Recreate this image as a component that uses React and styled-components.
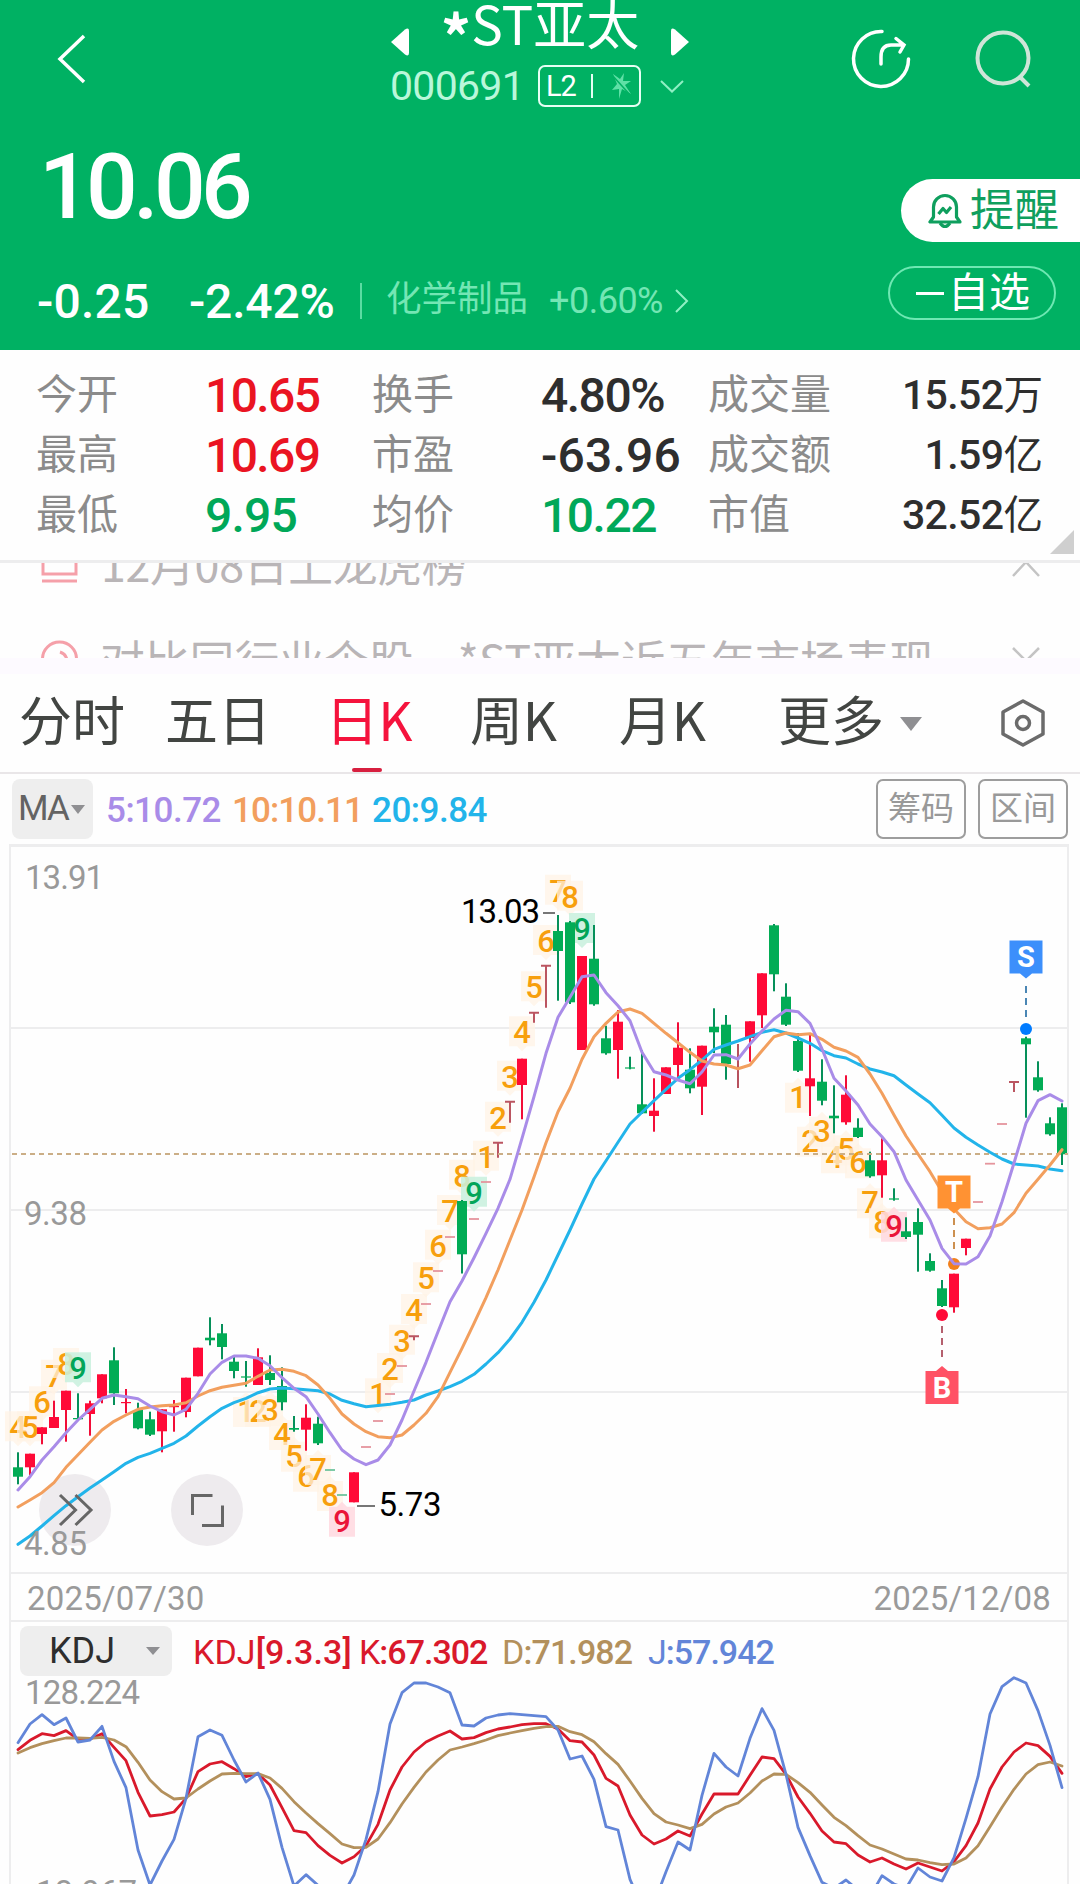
import styled, { createGlobalStyle } from "styled-components";

const colors = {
  green: "#00b163",
  up: "#ff0a37",
  upText: "#ea1422",
  down: "#02ac55",
  downText: "#00a859",
  ma5: "#a98ce8",
  ma10: "#f29f5e",
  ma20: "#22b4ea",
  k: "#d9192b",
  d: "#b3905c",
  j: "#6285d8",
  line: "#ededee",
};

const GlobalStyle = createGlobalStyle`
  * {
    box-sizing: border-box;
  }

  body {
    margin: 0;
    background: #fefefe;
    font-family: Roboto, "Noto Sans CJK SC", sans-serif;
    color: #2e2e2e;
  }

  svg {
    display: block;
    flex: none;
  }
`;

const Page = styled.div`
  width: 1080px;
  height: 1884px;
  overflow: hidden;
`;

/* ---------- header ---------- */

const Header = styled.header`
  height: 350px;
  background: ${colors.green};
  color: #fff;
`;

const TopBar = styled.div`
  display: grid;
  grid-template-columns: 1fr 298px 1fr;
  height: 120px;
`;

const TopLeft = styled.div`
  padding: 34px 0 0 57px;
`;

const TopRight = styled.div`
  display: flex;
  justify-content: flex-end;
  gap: 60px;
  padding: 26px 46px 0 0;
`;

const TitleRow = styled.div`
  display: flex;
  justify-content: space-between;
  height: 65px;

  & svg {
    margin-top: 28px;
  }
`;

const StockName = styled.div`
  font-family: "Noto Sans CJK SC", sans-serif;
  font-size: 53px;
  line-height: 45px;
  white-space: nowrap;

  & span {
    font-size: 60px;
    font-weight: 700;
    line-height: 1px;
    vertical-align: -15px;
  }
`;

const CodeRow = styled.div`
  display: flex;
  align-items: center;
  height: 42px;
`;

const Code = styled.div`
  width: 147px;
  font-size: 41px;
  letter-spacing: -0.7px;
  line-height: 42px;
  text-indent: -1px;
  color: #b9f7da;
`;

const LevelBox = styled.div`
  display: flex;
  align-items: center;
  width: 103px;
  height: 42px;
  padding: 0 4px 0 6px;
  border: 2px solid #e6fff4;
  border-radius: 7px;
  font-size: 29px;
  letter-spacing: -1px;
  margin-right: 19px;

  & svg {
    margin-left: 3px;
  }
`;

const Bar = styled.i`
  width: 2px;
  height: ${(p) => p.$h}px;
  margin: 0 ${(p) => p.$gap}px;
  background: ${(p) => p.$color};
`;

const QuoteArea = styled.div`
  display: flex;
  justify-content: space-between;
  height: 230px;
`;

const Price = styled.div`
  height: 132px;
  padding-left: 39px;
  font-size: 91px;
  font-weight: 500;
  line-height: 134px;
  letter-spacing: -4.6px;
`;

const ChangeRow = styled.div`
  display: flex;
  align-items: center;
  height: 98px;
  padding-left: 37px;
  line-height: 60px;
  white-space: nowrap;
`;

const Change = styled.div`
  width: ${(p) => p.$w}px;
  padding-top: 2px;
  font-size: 48px;
  font-weight: 500;
  letter-spacing: ${(p) => p.$ls}px;
`;

const Sector = styled.div`
  display: flex;
  align-items: center;
  margin-left: 10px;
  color: #74e6b4;
  font-size: 36px;
  letter-spacing: -0.5px;

  & b {
    width: 163px;
    padding-bottom: 4px;
    font-weight: 400;
    font-size: 35.5px;
    letter-spacing: 0;
  }

  & svg {
    margin-left: 12px;
  }
`;

const Actions = styled.div`
  display: flex;
  flex-direction: column;
  align-items: flex-end;
  gap: 24px;
  padding-top: 59px;
`;

const RemindButton = styled.div`
  display: flex;
  align-items: center;
  gap: 8px;
  width: 179px;
  height: 63px;
  padding-left: 27px;
  border-radius: 32px 0 0 32px;
  background: #fff;
  color: #0f9f5e;
  font-size: 44.5px;
  line-height: 60px;
`;

const WatchButton = styled.div`
  display: flex;
  align-items: center;
  gap: 4px;
  width: 168px;
  height: 54px;
  margin-right: 24px;
  padding-left: 26px;
  border: 2px solid #6ee8b3;
  border-radius: 27px;
  font-size: 41px;
  line-height: 50px;

  & i {
    width: 28px;
    height: 3px;
    background: #fff;
  }
`;

/* ---------- stats ---------- */

const Stats = styled.section`
  position: relative;
  display: grid;
  grid-template-columns: repeat(4, 168px) 334px;
  grid-auto-rows: 60px;
  align-content: start;
  height: 213px;
  padding: 15px 0 0 36px;
  border-bottom: 3px solid ${colors.line};
  line-height: 60px;
  white-space: nowrap;
`;

const StatLabel = styled.div`
  font-size: 41px;
  color: #8b8b8b;
`;

const StatValue = styled.div`
  padding-left: 1px;
  font-size: 48px;
  font-weight: 500;
  line-height: 62px;
  letter-spacing: ${(p) => p.$ls}px;
  color: ${(p) => p.$color || "#2e2e2e"};
`;

const StatPair = styled.div`
  display: flex;
  justify-content: space-between;

  & b {
    font-size: 41px;
    font-weight: 500;
    letter-spacing: -0.6px;
  }

  & small {
    margin-right: -1px;
    font-size: 39.5px;
    font-weight: 400;
    letter-spacing: 0;
  }
`;

const Corner = styled.i`
  position: absolute;
  right: 6px;
  bottom: 6px;
  border-left: 24px solid transparent;
  border-bottom: 24px solid #cfcfcf;
`;

/* ---------- news ticker ---------- */

const News = styled.section`
  height: 95px;
  overflow: hidden;
`;

const NewsRow = styled.div`
  display: flex;
  align-items: center;
  height: 96px;
  margin-top: ${(p) => p.$top || 0}px;
  padding: 0 40px 0 ${(p) => p.$left}px;
  font-family: "Noto Sans CJK SC", sans-serif;
  font-size: 44.8px;
  line-height: 60px;
  color: #b9b5b7;
  white-space: pre;

  & p {
    flex: 1;
    margin: 0 0 0 ${(p) => p.$gap}px;
    letter-spacing: ${(p) => p.$ls || 0}px;
    word-spacing: 1px;
  }
`;

const Gap = styled.div`
  height: 16px;
  background: #fdfaff;
`;

/* ---------- tabs ---------- */

const Tabs = styled.nav`
  display: flex;
  height: 100px;
  padding-left: 19px;
  border-bottom: 2px solid #e9e6e8;
  font-family: "Noto Sans CJK SC", sans-serif;
  font-size: 53px;
  line-height: 89px;
  color: #424542;
  white-space: nowrap;
`;

const Tab = styled.div`
  display: flex;
  flex-direction: column;
  align-items: center;
  margin-right: ${(p) => p.$mr}px;
  width: ${(p) => p.$w}px;
  color: ${(p) => (p.$active ? "#f5133d" : "inherit")};

  &::after {
    content: "";
    display: ${(p) => (p.$active ? "block" : "none")};
    width: 30px;
    height: 4px;
    margin: 5px 4px 0 0;
    border-radius: 2px;
    background: #d71f3f;
  }
`;

const Caret = styled.i`
  border: ${(p) => p.$w / 2}px solid transparent;
  border-top: ${(p) => p.$h}px solid #8f8f92;
  border-bottom: 0;
`;

const More = styled.div`
  display: flex;
  align-items: center;
  gap: 16px;
  width: 223px;
  height: 89px;

  & i {
    margin-top: 11px;
  }
`;

/* ---------- moving average bar ---------- */

const MaBar = styled.div`
  display: flex;
  align-items: flex-start;
  height: 70px;
  padding: 5px 12px 0 12px;
  font-size: 35px;
  line-height: 60px;
`;

const MaSelect = styled.div`
  display: flex;
  align-items: center;
  gap: 3px;
  width: 81px;
  height: 60px;
  margin-right: 13px;
  padding-left: 6px;
  border-radius: 8px;
  background: #eeeeee;
  font-size: 35px;
  line-height: 58px;
  letter-spacing: -1.8px;
  color: #636363;
`;

const Reading = styled.span`
  width: ${(p) => p.$w}px;
  padding-top: 2px;
  letter-spacing: ${(p) => p.$ls || 0}px;
  font-weight: 500;
  white-space: nowrap;
  color: ${(p) => p.$color};

  & em {
    font-style: normal;
    font-weight: 400;
  }
`;

const Spacer = styled.div`
  flex: 1;
`;

const OutlineButton = styled.div`
  width: 90px;
  height: 60px;
  margin-left: 12px;
  border: 2px solid #9d9d9d;
  border-radius: 7px;
  font-size: 33px;
  line-height: 55px;
  text-align: center;
  color: #999;
`;

/* ---------- charts ---------- */

const ChartFrame = styled.section`
  width: 1060px;
  height: 1040px;
  margin-left: 9px;
  border: 2px solid ${colors.line};
  border-top-width: 3px;
  border-bottom: 0;
`;

const ChartSvg = styled.svg`
  margin-left: -11px;
  overflow: visible;
  font-family: Roboto, sans-serif;
`;

const DateRow = styled.div`
  display: flex;
  justify-content: space-between;
  height: 50px;
  padding: 0 16px 0 16px;
  border: solid ${colors.line};
  border-width: 2px 0;
  font-size: 33px;
  line-height: 49px;
  letter-spacing: 0.2px;
  color: #9a9a9a;
`;

const KdjBar = styled.div`
  display: flex;
  align-items: center;
  height: 54px;
  padding: 3px 0 0 9px;
  font-size: 34px;
  line-height: 50px;
`;

const KdjSelect = styled.div`
  display: flex;
  align-items: center;
  justify-content: space-between;
  width: 152px;
  height: 50px;
  margin-right: 21px;
  padding: 0 12px 0 29px;
  border-radius: 8px;
  background: #eeeeee;
  font-size: 36px;
  line-height: 54px;
`;

// index on the time axis -> x
const px = (i) => 18 + i * 12;

// [index, type, bodyTop, bodyBottom, high, low], u = up, d = down
const candles = [
  [0, "d", 1467.3, 1476.7, 1452.3, 1484.3],
  [1, "u", 1453.7, 1467.3, 1453.7, 1475],
  [2, "u", 1427.3, 1434, 1427.3, 1444.3],
  [3, "u", 1417, 1428, 1400.7, 1428],
  [4, "u", 1390.7, 1410, 1390.7, 1441.7],
  [5, "d", 1418, 1419.3, 1393.3, 1419],
  [6, "u", 1403.3, 1414, 1400.7, 1435.7],
  [7, "u", 1374.3, 1398.3, 1374.3, 1403.3],
  [8, "d", 1360.3, 1393.3, 1347.3, 1405],
  [9, "u", 1402, 1403.2, 1389, 1413.3],
  [10, "d", 1410, 1428.3, 1402.7, 1429.3],
  [11, "d", 1419.3, 1434.7, 1411.7, 1436],
  [12, "u", 1409.3, 1431.3, 1409.3, 1452.3],
  [13, "u", 1406, 1407.2, 1400, 1431.7],
  [14, "u", 1377.7, 1412, 1377.7, 1417.3],
  [15, "u", 1347.7, 1376.3, 1347.7, 1376.3],
  [16, "d", 1337.7, 1340.3, 1317.3, 1345.3],
  [17, "d", 1333.3, 1347, 1324, 1359.3],
  [18, "d", 1361.7, 1371, 1356.7, 1378.3],
  [19, "d", 1376.4, 1377.6, 1361, 1386.7],
  [20, "u", 1357.3, 1385, 1348.3, 1385],
  [21, "d", 1373, 1380, 1355.3, 1385],
  [22, "d", 1386, 1402.3, 1367.3, 1410.3],
  [23, "d", 1428, 1429.7, 1416, 1431.7],
  [24, "u", 1417.7, 1429.7, 1404.3, 1450.7],
  [25, "d", 1423.7, 1443.3, 1416.7, 1445],
  [28, "u", 1472.3, 1502.3, 1472.3, 1502.3],
  [37, "d", 1201, 1254.3, 1200, 1273.5],
  [42, "u", 1058.7, 1085, 1058.7, 1119.3],
  [45, "d", 931, 951, 915, 1000.7],
  [46, "d", 922.3, 1002.3, 921, 1004],
  [47, "u", 956, 1050, 956, 1050],
  [48, "d", 958.7, 1004.3, 925, 1005.7],
  [49, "d", 1038.3, 1053.3, 1025.7, 1054.7],
  [50, "u", 1021.7, 1050, 1010, 1078.7],
  [51, "d", 1067.4, 1068.6, 1056.7, 1069.3],
  [52, "d", 1104.3, 1113.3, 1050, 1114],
  [53, "u", 1110.7, 1116, 1078.3, 1131.7],
  [54, "u", 1067.3, 1094, 1067.3, 1094],
  [55, "u", 1047.7, 1065, 1022.3, 1077],
  [56, "d", 1069.7, 1088.3, 1048.3, 1093.3],
  [57, "u", 1045.7, 1086.7, 1045.7, 1115],
  [58, "d", 1026.7, 1032.3, 1008.3, 1053],
  [59, "d", 1024.7, 1064, 1015, 1079.7],
  [61, "u", 1021.3, 1038, 1021.3, 1061.7],
  [62, "u", 973.3, 1015.3, 973.3, 1028],
  [63, "d", 925.3, 974.3, 924, 991.3],
  [64, "d", 996.7, 1024.7, 983.3, 1026],
  [65, "d", 1041, 1070.7, 1033, 1072],
  [66, "u", 1078.3, 1086.3, 1034, 1116],
  [67, "d", 1081.7, 1100.7, 1059.3, 1105.3],
  [68, "d", 1115.7, 1118.3, 1085.3, 1133.3],
  [69, "u", 1094.7, 1122.3, 1075.3, 1124.7],
  [70, "d", 1127.7, 1137, 1118.3, 1138],
  [71, "d", 1160.3, 1176.3, 1151.7, 1177.7],
  [72, "u", 1160.3, 1175.3, 1138.3, 1197.7],
  [73, "d", 1198.4, 1199.6, 1188.3, 1200.7],
  [74, "d", 1231.3, 1237, 1217.3, 1239],
  [75, "d", 1222, 1234.7, 1208.3, 1271.7],
  [76, "d", 1261, 1270.7, 1253.3, 1271.7],
  [77, "d", 1288.3, 1306, 1280, 1307],
  [78, "u", 1273.7, 1307.3, 1273.7, 1312.7],
  [79, "u", 1238.7, 1248, 1238.7, 1255.3],
  [84, "d", 1038.3, 1044.3, 1036.7, 1117.7],
  [85, "d", 1077.3, 1090.3, 1061.3, 1091.7],
  [86, "d", 1123.3, 1134.3, 1117.3, 1135.7],
  [87, "d", 1107.3, 1154.3, 1103.3, 1165],
];

// one-price days: [index, y, stem, color]
const flatDays = [
  [26, 1470, 0, "#6fc49d"],
  [27, 1495, 0, "#6fc49d"],
  [29, 1447, 0],
  [30, 1421, 0],
  [31, 1394, 0],
  [32, 1366, 0],
  [33, 1336.3, 4],
  [34, 1304, 0],
  [35, 1271, 0],
  [36, 1237, 0],
  [38, 1219, 0],
  [39, 1182, 0],
  [40, 1142.7, 15],
  [41, 1101.7, 21],
  [43, 1012.7, 10],
  [44, 965.7, 42],
  [80, 1202, 0],
  [81, 1163.7, 0],
  [82, 1124, 0],
  [83, 1082, 10],
];

const ma5 = [
  1490, 1476.7, 1460, 1446.7, 1432.7, 1420, 1409.3, 1398.3, 1395, 1396.7, 1398.7, 1406, 1411.7, 1415, 1409.3,
  1393.3, 1374, 1362.3, 1356, 1356, 1358.3, 1365.7, 1377.7, 1388.3, 1396.7, 1414, 1432.7, 1450, 1459, 1464.7,
  1460, 1445, 1420, 1391, 1362.3, 1331.7, 1301.7, 1281, 1257.7, 1233.3, 1208.3, 1179.3, 1138.3, 1096.7, 1053.3,
  1017.3, 997.3, 976.7, 975, 992.7, 1005.7, 1020.7, 1052.3, 1071.7, 1075, 1080, 1083.7, 1072, 1055, 1054.7,
  1059, 1044, 1031, 1019, 1010.3, 1011.7, 1023.3, 1049, 1078.3, 1091, 1105, 1124, 1136.7, 1151.7, 1180,
  1200, 1220, 1248.3, 1263.7, 1264, 1256.7, 1236, 1201.7, 1163, 1123.3, 1100.7, 1094.7, 1101,
];

const ma10 = [
  1507, 1500, 1492.7, 1482.7, 1467.3, 1454.7, 1442.3, 1430, 1421.3, 1415, 1409.3, 1407, 1405.7, 1405, 1402.7,
  1396, 1390.7, 1387.3, 1385.3, 1383.3, 1376.3, 1370, 1369.3, 1371.3, 1375.7, 1385, 1398.3, 1414, 1424, 1431.7,
  1436.7, 1437.7, 1435, 1425, 1413.3, 1396.7, 1372.3, 1348.3, 1323.3, 1297.7, 1270, 1240, 1210, 1177, 1142.7,
  1111.7, 1088.3, 1059.3, 1036.7, 1023.3, 1012, 1009, 1013.3, 1023.3, 1033.3, 1042.7, 1052.3, 1061, 1064, 1065,
  1068.7, 1065, 1050.7, 1036.7, 1033, 1034.7, 1033.7, 1039.3, 1047.3, 1051, 1057.3, 1074, 1093.3, 1115, 1136,
  1154, 1171.7, 1191.7, 1209, 1221.7, 1228.7, 1227.7, 1224, 1212.7, 1193.3, 1179.3, 1165, 1149.7,
];

const ma20 = [
  1544.3, 1536, 1526, 1515.7, 1505.7, 1496.7, 1488, 1480, 1471.7, 1463.3, 1457.3, 1453.3, 1448.3, 1443.3, 1436,
  1426, 1416.7, 1408.3, 1402.7, 1398.3, 1392.7, 1389, 1388, 1388.7, 1389.7, 1390.7, 1394, 1400.3, 1403.7, 1406.7,
  1405.4, 1404.3, 1402.3, 1400, 1395, 1391, 1386.7, 1381.3, 1374.3, 1364, 1352.7, 1339, 1322.3, 1302.3, 1280,
  1255, 1230, 1204, 1179, 1160.7, 1142.3, 1124, 1112.3, 1100.7, 1089.3, 1078.3, 1069.7, 1060, 1049.3, 1045,
  1041, 1036.7, 1032.3, 1029.7, 1033, 1038, 1043.3, 1050.7, 1055.7, 1058, 1064, 1069, 1072, 1075.7, 1085,
  1094, 1102.7, 1115.3, 1128, 1137.3, 1145, 1152.3, 1159, 1164, 1165, 1166, 1169, 1170.7,
];

// oscillator values, in thirds of a pixel from the top of the date row
const kdj = {
  d: [
    579, 563, 551, 542, 534, 534, 535, 532, 540, 560, 607, 660, 695, 717, 714, 687, 663, 642, 640, 641, 641, 654,
    685, 725, 759, 791, 821, 852, 863, 862, 837, 788, 732, 682, 636, 600, 570, 561, 551, 540, 527, 519, 512, 505,
    500, 499, 515, 524, 545, 581, 613, 663, 715, 761, 786, 795, 806, 793, 762, 741, 729, 699, 663, 642, 643, 668,
    697, 735, 772, 797, 827, 855, 867, 882, 897, 900, 908, 914, 912, 894, 857, 800, 742, 688, 642, 614, 606, 618,
  ],
  k: [
    569, 541, 521, 527, 512, 538, 537, 521, 562, 602, 697, 768, 764, 756, 715, 635, 612, 605, 626, 650, 641, 675,
    743, 812, 818, 857, 886, 909, 890, 857, 793, 690, 621, 576, 546, 528, 513, 537, 533, 518, 507, 501, 494, 491,
    491, 507, 542, 546, 585, 655, 678, 765, 825, 852, 837, 813, 828, 762, 702, 702, 702, 646, 591, 596, 643, 711,
    760, 813, 846, 851, 885, 906, 894, 912, 927, 909, 921, 933, 905, 857, 789, 687, 621, 576, 549, 557, 589, 640,
  ],
  j: [
    548, 492, 464, 494, 474, 546, 540, 499, 604, 683, 870, 975, 903, 838, 715, 530, 510, 526, 600, 666, 639, 718,
    862, 978, 944, 976, 1010, 1010, 945, 838, 695, 492, 398, 369, 369, 381, 398, 495, 498, 474, 465, 461, 464, 467,
    470, 510, 597, 588, 658, 800, 810, 958, 1040, 1030, 935, 846, 870, 706, 580, 621, 648, 535, 446, 511, 643, 802,
    887, 967, 985, 960, 990, 1010, 947, 972, 985, 924, 951, 963, 893, 775, 650, 462, 380, 353, 369, 452, 556, 683,
  ],
};

// nine-turn counts: first index, pointer direction, centre of each digit
const turns = [
  { from: 0, first: 4, dir: 1, ys: [1427.3, 1427.3, 1402.3, 1375.7, 1364, 1368.3], end: "green" },
  { from: 19, first: 1, dir: -1, ys: [1411, 1411, 1410, 1434, 1455.7, 1475.7, 1469, 1495, 1520.7], end: "red" },
  { from: 30, first: 1, dir: 1, ys: [1394.3, 1369, 1340.7, 1310, 1278.3, 1245.7, 1211, 1175.7, 1192.7], end: "green" },
  { from: 39, first: 1, dir: 1, ys: [1156.7, 1117.7, 1076.7, 1032.3, 987.3, 941, 890.7, 896.7, 929], end: "green" },
  { from: 65, first: 1, dir: -1, ys: [1096.7, 1140.7, 1130.7, 1157.3, 1149.3, 1162.3, 1202.3, 1222.3, 1225.7], end: "red" },
];

const turnStyles = {
  green: { box: "#c9f0de", text: "#02a558", opacity: 0.88 },
  red: { box: "#ffd9e0", text: "#ea1539", opacity: 0.88 },
  plain: { box: "#fff2e4", text: "#f79f0d", opacity: 0.72 },
};

const trades = [
  { letter: "S", x: 1026, top: 940.5, dir: 1, fill: "#3c8ffb", dash: "#4a86b4", dot: "#007bff", dotY: 1029, from: 986, to: 1021 },
  { letter: "T", x: 954, top: 1175.5, dir: 1, fill: "#ff9233", dash: "#cc9050", dot: "#f2801c", dotY: 1264, from: 1218, to: 1254 },
  { letter: "B", x: 942, top: 1371, dir: -1, fill: "#ff5265", dash: "#b5606e", dot: "#ff0a37", dotY: 1315, from: 1326, to: 1361 },
];

function Series({ values, color, toY = (v) => v, width = 3 }) {
  const points = values.map((v, i) => `${px(i)},${toY(v)}`).join(" ");
  return (
    <polyline
      points={points}
      fill="none"
      stroke={color}
      strokeWidth={width}
      strokeLinejoin="round"
      strokeLinecap="round"
    />
  );
}

function Candle({ data }) {
  const [i, type, top, bottom, high, low] = data;
  const x = px(i);
  return (
    <g>
      <rect x={x - 1} y={high} width="2" height={low - high} fill={type === "u" ? "#f20d38" : "#06905a"} />
      <rect
        x={x - 5}
        y={top}
        width="10"
        height={bottom - top}
        fill={type === "u" ? colors.up : colors.down}
      />
    </g>
  );
}

function TurnMark({ x, y, n, dir, kind }) {
  const s = turnStyles[kind];
  const top = dir > 0 ? y - 16 : y - 14;
  const tip = dir > 0 ? top + 30 : top;
  return (
    <g>
      <path
        d={`M${x - 13} ${top}h26v30h-26z M${x - 5} ${tip}l5 ${dir * 5}l5 ${-dir * 5}z`}
        fill={s.box}
        opacity={s.opacity}
      />
      <text x={x} y={y + 11} fontSize="31" fontWeight="500" textAnchor="middle" fill={s.text}>
        {n}
      </text>
    </g>
  );
}

function TradeMark({ t }) {
  const edge = t.dir > 0 ? t.top + 33 : t.top;
  return (
    <g>
      <path
        d={`M${t.x - 16.5} ${t.top}h33v33h-33z M${t.x - 6} ${edge}l6 ${t.dir * 5}l6 ${-t.dir * 5}z`}
        fill={t.fill}
      />
      <text x={t.x} y={t.top + 26.5} fontSize="29" fontWeight="700" textAnchor="middle" fill="#fff">
        {t.letter}
      </text>
    </g>
  );
}

function CandleChart() {
  return (
    <ChartSvg width="1080" height="725" viewBox="0 847 1080 725">
      {[1028, 1210, 1392].map((y) => (
        <path key={y} d={`M11 ${y}H1067`} stroke={colors.line} strokeWidth="2" />
      ))}

      <circle cx="75" cy="1510" r="36" fill="#eeebee" />
      <circle cx="207" cy="1510" r="36" fill="#eeebee" />

      {turns.map((t) =>
        t.ys.map((y, i) => (
          <TurnMark
            key={`${t.from}-${i}`}
            x={px(t.from + i)}
            y={y}
            n={t.first + i}
            dir={t.dir}
            kind={t.first + i === 9 ? t.end : "plain"}
          />
        ))
      )}

      {candles.map((c) => (
        <Candle key={c[0]} data={c} />
      ))}
      <path d="M738 1044V1088" stroke="#b8525e" strokeWidth="2" />
      {flatDays.map(([i, y, stem, color]) => (
        <path
          key={i}
          d={`M${px(i) - 5} ${y}h10M${px(i)} ${y}v${stem}`}
          stroke={color || (stem ? "#bb5561" : "#e5959d")}
          strokeWidth={stem ? 2 : 1.8}
        />
      ))}

      {trades.map((t) => (
        <g key={t.letter}>
          <path d={`M${t.x} ${t.from}V${t.to}`} stroke={t.dash} strokeWidth="2" strokeDasharray="7 5" />
          <circle cx={t.x} cy={t.dotY} r="6" fill={t.dot} />
        </g>
      ))}

      <path d="M12 1154H1068" stroke="#cbae86" strokeWidth="1.8" strokeDasharray="5 4" />
      <Series values={ma20} color={colors.ma20} />
      <Series values={ma10} color={colors.ma10} />
      <Series values={ma5} color={colors.ma5} />

      {trades.map((t) => (
        <TradeMark key={t.letter} t={t} />
      ))}

      <g fill="none" stroke="#666" strokeWidth="3">
        <path d="M60 1495l15.500 15l-15.500 15M75.500 1495l15.500 15l-15.500 15" />
        <path d="M192.500 1515v-19.500h20M202 1525.500h20.500v-20" />
      </g>

      <g fontSize="33" fill="#999">
        <text x="25" y="889" textLength="79">13.91</text>
        <text x="24" y="1225" textLength="63">9.38</text>
        <text x="24" y="1555" textLength="63">4.85</text>
      </g>
      <g fontSize="33" fill="#000">
        <text x="461" y="923" textLength="79">13.03</text>
        <text x="378.500" y="1516" textLength="63">5.73</text>
      </g>
      <path d="M543 913h12M357 1506h18" stroke="#777" strokeWidth="1.8" />
    </ChartSvg>
  );
}

function KdjChart() {
  const toY = (v) => 1560 + v / 3;
  return (
    <ChartSvg width="1080" height="208" viewBox="0 1676 1080 208">
      <g fontSize="33" fill="#999">
        <text x="25" y="1704" textLength="115">128.224</text>
        <text x="27" y="1904" textLength="110">-18.967</text>
      </g>
      <Series values={kdj.k} color={colors.k} toY={toY} width={2.8} />
      <Series values={kdj.d} color={colors.d} toY={toY} width={2.8} />
      <Series values={kdj.j} color={colors.j} toY={toY} width={2.8} />
    </ChartSvg>
  );
}

const stats = [
  {
    left: { label: "今开", value: "10.65", color: colors.upText, ls: -1.6 },
    mid: { label: "换手", value: "4.80%", ls: -1.5 },
    right: { label: "成交量", value: "15.52", unit: "万" },
  },
  {
    left: { label: "最高", value: "10.69", color: colors.upText, ls: -1.6 },
    mid: { label: "市盈", value: "-63.96", ls: 0.2 },
    right: { label: "成交额", value: "1.59", unit: "亿" },
  },
  {
    left: { label: "最低", value: "9.95", color: colors.downText, ls: -0.8 },
    mid: { label: "均价", value: "10.22", color: colors.downText, ls: -1.5 },
    right: { label: "市值", value: "32.52", unit: "亿" },
  },
];

function StatRow({ left, mid, right }) {
  return (
    <>
      <StatLabel>{left.label}</StatLabel>
      <StatValue $color={left.color} $ls={left.ls}>{left.value}</StatValue>
      <StatLabel>{mid.label}</StatLabel>
      <StatValue $color={mid.color} $ls={mid.ls}>{mid.value}</StatValue>
      <StatPair>
        <StatLabel>{right.label}</StatLabel>
        <b>
          {right.value}
          <small>{right.unit}</small>
        </b>
      </StatPair>
    </>
  );
}

function StockHeader() {
  return (
    <Header>
      <TopBar>
        <TopLeft>
          <svg width="30" height="50" fill="none" stroke="#fff" strokeWidth="3.5">
            <path d="M27 2L3 25L27 48" />
          </svg>
        </TopLeft>
        <div>
          <TitleRow>
            <svg width="18" height="28" fill="#fff">
              <path d="M0 14L14 1.500Q18 -1 18 3V25Q18 29 14 26.500z" />
            </svg>
            <StockName>
              <span>*</span>ST亚太
            </StockName>
            <svg width="18" height="28" fill="#fff">
              <path d="M18 14L4 1.500Q0 -1 0 3V25Q0 29 4 26.500z" />
            </svg>
          </TitleRow>
          <CodeRow>
            <Code>000691</Code>
            <LevelBox>
              L2
              <Bar $h={24} $gap={15} $color="#e6fff4" />
              <svg width="22" height="28" fill="#5fe0a6">
                <path d="M2 2L9 7L13 1L12 9L20 9L14 13L20 22L11 17L8 27L8 17L1 18L6 12z" />
                <path d="M1 3L21 25" stroke={colors.green} strokeWidth="1.500" />
              </svg>
            </LevelBox>
            <svg width="24" height="13" fill="none" stroke="#8ff0c4" strokeWidth="2">
              <path d="M1 1L12 11.500L23 1" />
            </svg>
          </CodeRow>
        </div>
        <TopRight>
          <svg width="62" height="66" fill="none" stroke="#fff" strokeWidth="3.500" strokeLinecap="round">
            <path d="M32 5.500A27.500 27.500 0 1 0 58.500 33" />
            <path d="M31 38V31Q31 19 41 19H52M46 12.500L54 19L50 26" />
          </svg>
          <svg width="62" height="66" viewBox="-3 0 62 66" fill="none" stroke="#cfe5d8" strokeWidth="4">
            <circle cx="28" cy="32" r="25.500" />
            <path d="M44 50L54 60" />
          </svg>
        </TopRight>
      </TopBar>
      <QuoteArea>
        <div>
          <Price>10.06</Price>
          <ChangeRow>
            <Change $w={152} $ls={0.2}>-0.25</Change>
            <Change $w={157} $ls={-0.2}>-2.42%</Change>
            <Bar $h={36} $gap={14} $color="#5bdca2" />
            <Sector>
              <b>化学制品</b>
              +0.60%
              <svg width="14" height="24" fill="none" stroke="#8ff0c4" strokeWidth="2">
                <path d="M1 1L12 12L1 23" />
              </svg>
            </Sector>
          </ChangeRow>
        </div>
        <Actions>
          <RemindButton>
            <svg width="34" height="36" fill="none" stroke="#0f9f5e" strokeWidth="3.200" strokeLinejoin="round">
              <path d="M2 29H32L28.500 24V14A11.500 11.500 0 0 0 5.500 14V24z" />
              <path d="M12 30Q17 37 22 30" />
              <path d="M10.500 21L15 15.500L18.500 19.500L23 14" />
            </svg>
            提醒
          </RemindButton>
          <WatchButton>
            <i />
            自选
          </WatchButton>
        </Actions>
      </QuoteArea>
    </Header>
  );
}

export default function App() {
  return (
    <Page>
      <GlobalStyle />
      <StockHeader />

      <Stats>
        {stats.map((row) => (
          <StatRow key={row.left.label} {...row} />
        ))}
        <Corner />
      </Stats>

      <News>
        <NewsRow $top={-48} $left={41} $gap={23} $ls={-0.3}>
          <svg width="37" height="44" fill="none" stroke="#f5a0a9" strokeWidth="3">
            <path d="M2 4V33H35V4zM1 40H36" />
          </svg>
          <p>12月08日上龙虎榜</p>
          <svg width="28" height="28" fill="none" stroke="#c4c4c4" strokeWidth="2.500">
            <path d="M1 27L14 13L27 27" />
          </svg>
        </NewsRow>
        <NewsRow $left={41} $gap={22}>
          <svg width="37" height="38" fill="none" stroke="#f5a0a9" strokeWidth="3">
            <circle cx="18.500" cy="19" r="17" />
            <path d="M19 12Q25 14 26 20" />
          </svg>
          <p>对比同行业个股{"    "}*ST亚太近五年市场表现</p>
          <svg width="28" height="24" fill="none" stroke="#c4c4c4" strokeWidth="2.500">
            <path d="M1 1L14 14L27 1" />
          </svg>
        </NewsRow>
      </News>
      <Gap />

      <Tabs>
        <Tab $w={106} $mr={41}>分时</Tab>
        <Tab $w={104} $mr={54}>五日</Tab>
        <Tab $w={90} $mr={54} $active>日K</Tab>
        <Tab $w={91} $mr={58}>周K</Tab>
        <Tab $w={91} $mr={70}>月K</Tab>
        <More>
          更多
          <Caret $w={22} $h={14} />
        </More>
        <svg width="44" height="98" fill="none" stroke="#6b6b6b" strokeWidth="3.500" strokeLinejoin="round">
          <path d="M22 27L42 38V60L22 71L2 60V38z" />
          <circle cx="22" cy="49" r="6.500" />
        </svg>
      </Tabs>

      <MaBar>
        <MaSelect>
          MA
          <Caret $w={14} $h={9} />
        </MaSelect>
        <Reading $w={126} $ls={-0.5} $color={colors.ma5}>5:10.72</Reading>
        <Reading $w={140} $ls={-0.9} $color={colors.ma10}>10:10.11</Reading>
        <Reading $w={120} $ls={-0.5} $color={colors.ma20}>20:9.84</Reading>
        <Spacer />
        <OutlineButton>筹码</OutlineButton>
        <OutlineButton>区间</OutlineButton>
      </MaBar>

      <ChartFrame>
        <CandleChart />
        <DateRow>
          <span>2025/07/30</span>
          <span>2025/12/08</span>
        </DateRow>
        <KdjBar>
          <KdjSelect>
            KDJ
            <Caret $w={14} $h={8} />
          </KdjSelect>
          <Reading $w={166} $ls={0.1} $color={colors.k}>
            <em>KDJ</em>[9.3.3]
          </Reading>
          <Reading $w={143} $ls={-1} $color={colors.k}>
            <em>K</em>:67.302
          </Reading>
          <Reading $w={146} $ls={-0.9} $color={colors.d}>
            <em>D</em>:71.982
          </Reading>
          <Reading $w={140} $ls={-1} $color={colors.j}>
            <em>J</em>:57.942
          </Reading>
        </KdjBar>
        <KdjChart />
      </ChartFrame>
    </Page>
  );
}
